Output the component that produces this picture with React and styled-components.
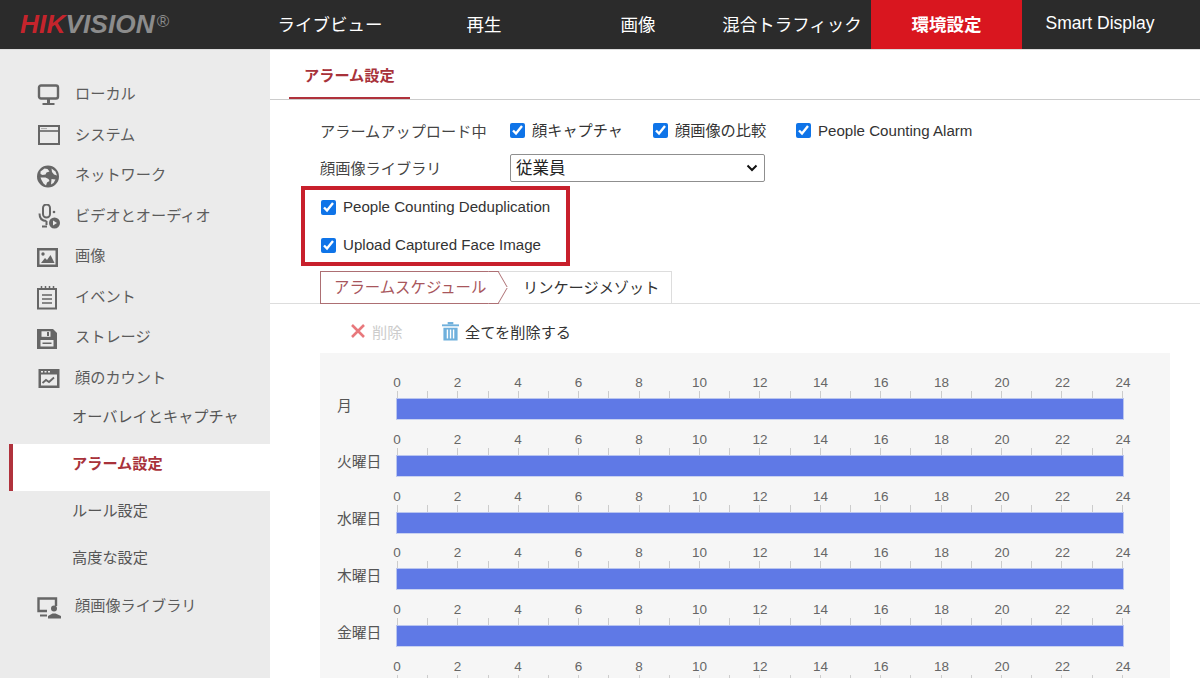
import React from "react";
import styled, { createGlobalStyle } from "styled-components";

const GlobalStyle = createGlobalStyle`
  html, body {
    margin: 0;
    height: 678px;
    overflow: hidden;
    background: #fff;
  }
  body {
    font-family: "Liberation Sans", "Noto Sans CJK JP", sans-serif;
    color: #444;
  }
`;

const Page = styled.div`
  width: 1200px;
  height: 678px;
  display: flex;
  flex-direction: column;
  overflow: hidden;
`;

const Header = styled.header`
  height: 49px;
  flex: none;
  display: flex;
  background: #2b2b2b;
  border-bottom: 1px solid #ddd;
`;

const Logo = styled.div`
  width: 253px;
  padding-left: 20px;
  box-sizing: border-box;
  display: flex;
  align-items: center;
  font-size: 26.2px;
  font-weight: bold;
  font-style: italic;
  letter-spacing: 0.1px;
  color: #8c8c8c;
  b {
    color: #c5242c;
  }
  sup {
    font-size: 17px;
    font-style: normal;
    font-weight: normal;
    margin: -6px 0 0 2px;
  }
`;

const NavItem = styled.div`
  width: ${(p) => (p.$active ? 151 : 154)}px;
  margin: 0 ${(p) => (p.$active ? 1 : 0)}px 0 ${(p) => (p.$active ? 2 : 0)}px;
  padding-bottom: 3px;
  box-sizing: border-box;
  display: flex;
  align-items: center;
  justify-content: center;
  color: #fff;
  font-size: 17.5px;
  font-weight: ${(p) => (p.$active ? "bold" : "normal")};
  background: ${(p) => (p.$active ? "#d9161f" : "transparent")};
`;

const Body = styled.div`
  flex: 1;
  display: flex;
  min-height: 0;
`;

const Sidebar = styled.aside`
  width: 270px;
  flex: none;
  padding-top: 23px;
  box-sizing: border-box;
  background: #ebebeb;
`;

const MenuRow = styled.div`
  height: 40.5px;
  padding: 0 0 2px 36px;
  box-sizing: border-box;
  display: flex;
  align-items: center;
  gap: 14px;
  font-size: 15.2px;
  color: #5c5c5c;
  svg {
    width: 25px;
    height: 25px;
    flex: none;
    margin-top: 6px;
    color: #666;
  }
`;

const SubRow = styled.div`
  height: 47px;
  margin-left: 9px;
  padding: 0 0 12px ${(p) => (p.$active ? 59 : 63)}px;
  box-sizing: border-box;
  display: flex;
  align-items: center;
  font-size: 15.2px;
  color: #555;
  ${(p) =>
    p.$active &&
    `
    background: #fff;
    border-left: 4px solid #b0323c;
    font-weight: bold;
    color: #a8323a;
  `}
`;

const Main = styled.main`
  flex: 1;
  min-width: 0;
  display: flex;
  flex-direction: column;
`;

const TabBar = styled.div`
  height: 50px;
  flex: none;
  padding-left: 19px;
  box-sizing: border-box;
  display: flex;
  border-bottom: 1px solid #ccc;
`;

const PageTab = styled.div`
  width: 121px;
  height: 49px;
  padding-left: 15px;
  box-sizing: border-box;
  display: flex;
  align-items: center;
  font-size: 15.2px;
  font-weight: bold;
  color: #a8323a;
  border-bottom: 2px solid #b0323c;
`;

const Form = styled.div`
  padding: 12px 0 0 50px;
  display: flex;
  flex-direction: column;
`;

const FormRow = styled.div`
  height: 37px;
  display: flex;
  align-items: center;
  font-size: 15.2px;
  color: #444;
`;

const FormLabel = styled.div`
  width: 190px;
  flex: none;
  padding-bottom: 2px;
`;

const CheckLabel = styled.label`
  width: ${(p) => (p.$width ? `${p.$width}px` : "auto")};
  display: flex;
  align-items: center;
  gap: 7px;
  font-size: ${(p) => (p.$latin ? "15.1px" : "15.2px")};
  line-height: 20px;
  color: #333;
  white-space: nowrap;
`;

const Check = styled.input.attrs({ type: "checkbox", defaultChecked: true })`
  width: 15px;
  height: 15px;
  margin: 0;
  flex: none;
  accent-color: #0f74e8;
`;

const SelectWrap = styled.div`
  position: relative;
  width: 255px;
  height: 28px;
  svg {
    position: absolute;
    right: 7px;
    top: 9px;
    pointer-events: none;
  }
`;

const Select = styled.select`
  width: 100%;
  height: 100%;
  padding: 0 5px;
  appearance: none;
  font-family: inherit;
  font-size: 16.5px;
  color: #222;
  background: #fff;
  border: 1px solid #8f8f8f;
  border-radius: 2px;
`;

const Highlight = styled.div`
  width: 269px;
  height: 80px;
  margin: 0 0 5px -19px;
  padding-left: 16px;
  box-sizing: border-box;
  border: 4px solid #c8202c;
  display: flex;
  flex-direction: column;
  justify-content: center;
  gap: 18px;
`;

const SubTabs = styled.div`
  height: 33px;
  flex: none;
  padding-left: 50px;
  box-sizing: border-box;
  display: flex;
  border-bottom: 1px solid #ddd;
`;

const ActiveSubTab = styled.div`
  position: relative;
  z-index: 1;
  width: 178px;
  height: 33px;
  padding: 0 0 3px 13px;
  box-sizing: border-box;
  display: flex;
  align-items: center;
  background: #fff;
  font-size: 15.4px;
  color: #a8565c;
  border: 1px solid #ad6f73;
  border-right: none;
  &::before,
  &::after {
    content: "";
    position: absolute;
    right: -5px;
    width: 10px;
    height: 16px;
    box-sizing: border-box;
    background: #fff;
    border-right: 1px solid #ad6f73;
  }
  &::before {
    top: -1px;
    transform: skewX(30deg);
    border-top: 1px solid #ad6f73;
  }
  &::after {
    bottom: -1px;
    transform: skewX(-30deg);
    border-bottom: 1px solid #ad6f73;
  }
`;

const IdleSubTab = styled.div`
  width: 174px;
  height: 32px;
  padding: 0 0 3px 25px;
  box-sizing: border-box;
  display: flex;
  align-items: center;
  font-size: 15.2px;
  color: #333;
  border-top: 1px solid #ddd;
  border-right: 1px solid #ddd;
`;

const Toolbar = styled.div`
  height: 49px;
  flex: none;
  padding: 5px 0 0 80px;
  box-sizing: border-box;
  display: flex;
  align-items: center;
`;

const ToolButton = styled.div`
  width: ${(p) => (p.$width ? `${p.$width}px` : "auto")};
  display: flex;
  align-items: center;
  gap: 6px;
  font-size: 15.2px;
  color: ${(p) => (p.$disabled ? "#ccc" : "#333")};
  svg {
    flex: none;
  }
`;

const SchedulePanel = styled.div`
  flex: 1;
  min-height: 0;
  margin: 0 30px 0 50px;
  padding: 23px 0 0 17px;
  overflow: hidden;
  background: #f6f6f6;
`;

const DayRow = styled.div`
  height: 56.8px;
  display: flex;
`;

const DayLabel = styled.div`
  width: 59px;
  flex: none;
  height: 20px;
  margin-top: 18px;
  display: flex;
  align-items: center;
  font-size: 14.8px;
  color: #555;
`;

const Track = styled.div`
  width: 728px;
  flex: none;
`;

const HourLabels = styled.div`
  height: 15px;
  padding: 0 1px;
  display: flex;
  justify-content: space-between;
`;

const HourLabel = styled.span`
  width: 0;
  display: flex;
  justify-content: center;
  font-family: "Liberation Sans", sans-serif;
  font-size: 13.5px;
  line-height: 14px;
  color: #666;
`;

const Ticks = styled.div`
  height: 7px;
  padding: 0 1px;
  display: flex;
  justify-content: space-between;
`;

const Tick = styled.i`
  width: 1px;
  background: #ccc;
`;

const Bar = styled.div`
  height: 22px;
  box-sizing: border-box;
  background: #5f79e6;
  border: 1px solid #b9c5ef;
  border-bottom-color: #c9d2f0;
`;

const IconMonitor = () => (
  <svg viewBox="0 0 25 25" fill="none" stroke="currentColor">
    <rect x="3" y="2.5" width="19" height="13" rx="2" strokeWidth="2.4" />
    <path d="M12.5 16v4" strokeWidth="3" />
    <path d="M6.5 21h12" strokeWidth="2" />
  </svg>
);

const IconSystem = () => (
  <svg viewBox="0 0 25 25" fill="none" stroke="currentColor">
    <rect x="3" y="3" width="20" height="18" strokeWidth="2" />
    <path d="M3 8h20" strokeWidth="1.6" />
    <path d="M5.5 5.6h5" strokeWidth="1" strokeDasharray="1 1" />
  </svg>
);

const IconGlobe = () => (
  <svg viewBox="0 0 25 25" fill="currentColor">
    <path
      fillRule="evenodd"
      d="M12 1.5a11 11 0 1 0 0 22 11 11 0 0 0 0-22zM4.500 7.500l4-3 3 .5 2 2.500-3 1-1 2-3 .5-2-1zM15.500 4.500l4 3 1.500 4-3-1-2-2.500zM4.500 13.500h5l3 1.500 1 2-2.500 1.500-1 3-2.500-2-2-3.500zM15.500 15l4 .5-2 3.500-2.500 1.500z"
    />
  </svg>
);

const IconMic = () => (
  <svg viewBox="0 0 25 25" fill="none" stroke="currentColor">
    <rect x="7" y="0.500" width="7" height="13" rx="3.500" strokeWidth="2" />
    <path d="M3.500 9.500c0 5 3 7.500 7 7.500M10.500 17v4M6 22.500h5" strokeWidth="2" />
    <circle cx="18" cy="8" r="1.300" fill="currentColor" stroke="none" />
    <circle cx="18.500" cy="19" r="5.500" fill="currentColor" stroke="none" />
    <path d="M17 16.500l4 2.500-4 2.500z" fill="#ebebeb" stroke="none" />
  </svg>
);

const IconImage = () => (
  <svg viewBox="0 0 25 25">
    <rect x="1" y="3" width="21" height="19" fill="#666" />
    <rect x="3.500" y="5.500" width="16" height="14" fill="#ebebeb" />
    <circle cx="7" cy="9" r="1.700" fill="#666" />
    <path d="M5 18l4-5 2 2 3.500-5 4 8z" fill="#666" />
  </svg>
);

const IconEvent = () => (
  <svg viewBox="0 0 25 25" fill="none" stroke="currentColor">
    <rect x="2" y="4" width="18" height="19.500" strokeWidth="2" />
    <path d="M5.500 1v4M9.500 1v4M13.500 1v4M17.500 1v4" strokeWidth="1.500" />
    <path d="M6 10h10M6 14h10M6 18h10" strokeWidth="1.600" />
  </svg>
);

const IconStorage = () => (
  <svg viewBox="0 0 25 25">
    <path d="M1 3h16l4 4v16H1z" fill="#666" />
    <rect x="5.500" y="5.300" width="9" height="5.500" fill="#ebebeb" />
    <rect x="11" y="6" width="2" height="4" fill="#666" />
    <rect x="4.500" y="14" width="13" height="6.500" fill="#ebebeb" />
    <rect x="6.500" y="16.500" width="9" height="1.500" fill="#666" />
  </svg>
);

const IconFaceCount = () => (
  <svg viewBox="0 0 25 25" fill="none">
    <rect x="2.500" y="3" width="21" height="19" fill="#666" />
    <rect x="5" y="8.500" width="16" height="11" fill="#ebebeb" />
    <path d="M5 5.700h10" stroke="#ebebeb" strokeWidth="1.600" strokeDasharray="2 1.500" />
    <path d="M6.500 17l3.500-3 3 2 5-4.500" stroke="#666" strokeWidth="1.800" />
  </svg>
);

const IconLibrary = () => (
  <svg viewBox="0 0 25 25" fill="none">
    <path d="M11 16H2.500V3.500H20V11" stroke="#666" strokeWidth="2.400" />
    <path d="M4 20.500h7" stroke="#666" strokeWidth="2" />
    <circle cx="18" cy="13.500" r="3" fill="#666" />
    <path d="M12 23.500v-2.500l4.500-2.500h3L25 21v2.500z" fill="#666" />
  </svg>
);

const IconClose = () => (
  <svg width="16" height="16" viewBox="0 0 16 16">
    <path d="M2 2l12 12M14 2L2 14" stroke="#e8787c" strokeWidth="2.600" fill="none" />
  </svg>
);

const IconTrash = () => (
  <svg width="17" height="20" viewBox="0 0 18 20" fill="#6fb0dc">
    <rect x="0" y="3" width="18" height="2" />
    <rect x="6" y="0.500" width="6" height="2.500" />
    <path
      fillRule="evenodd"
      d="M1.500 6.500h15V20h-15zM5 8.500v9.500h1.500V8.500zM8.300 8.500v9.500h1.500V8.500zM11.500 8.500v9.500H13V8.500z"
    />
  </svg>
);

const IconChevron = () => (
  <svg width="12" height="10" viewBox="0 0 12 10" fill="none">
    <path d="M1.500 2.500L6 7l4.500-4.500" stroke="#111" strokeWidth="2" />
  </svg>
);

const menuItems = [
  { label: "ローカル", Icon: IconMonitor },
  { label: "システム", Icon: IconSystem },
  { label: "ネットワーク", Icon: IconGlobe },
  { label: "ビデオとオーディオ", Icon: IconMic },
  { label: "画像", Icon: IconImage },
  { label: "イベント", Icon: IconEvent },
  { label: "ストレージ", Icon: IconStorage },
  { label: "顔のカウント", Icon: IconFaceCount },
];

const navItems = ["ライブビュー", "再生", "画像", "混合トラフィック", "環境設定", "Smart Display"];
// the sixth row only shows its hour ruler above the fold
const days = ["月", "火曜日", "水曜日", "木曜日", "金曜日", ""];
const hours = Array.from({ length: 13 }, (_, i) => i * 2);
const ticks = Array.from({ length: 25 }, (_, i) => i);

export default function App() {
  return (
    <Page>
      <GlobalStyle />
      <Header>
        <Logo>
          <b>HIK</b>VISION<sup>®</sup>
        </Logo>
        {navItems.map((item) => (
          <NavItem key={item} $active={item === "環境設定"}>
            {item}
          </NavItem>
        ))}
      </Header>
      <Body>
        <Sidebar>
          {menuItems.map(({ label, Icon }) => (
            <MenuRow key={label}>
              <Icon />
              {label}
            </MenuRow>
          ))}
          <SubRow>オーバレイとキャプチャ</SubRow>
          <SubRow $active>アラーム設定</SubRow>
          <SubRow>ルール設定</SubRow>
          <SubRow>高度な設定</SubRow>
          <MenuRow>
            <IconLibrary />
            顔画像ライブラリ
          </MenuRow>
        </Sidebar>
        <Main>
          <TabBar>
            <PageTab>アラーム設定</PageTab>
          </TabBar>
          <Form>
            <FormRow>
              <FormLabel>アラームアップロード中</FormLabel>
              <CheckLabel $width={143}>
                <Check />
                顔キャプチャ
              </CheckLabel>
              <CheckLabel $width={143}>
                <Check />
                顔画像の比較
              </CheckLabel>
              <CheckLabel $latin>
                <Check />
                People Counting Alarm
              </CheckLabel>
            </FormRow>
            <FormRow>
              <FormLabel>顔画像ライブラリ</FormLabel>
              <SelectWrap>
                <Select defaultValue="staff">
                  <option value="staff">従業員</option>
                </Select>
                <IconChevron />
              </SelectWrap>
            </FormRow>
            <Highlight>
              <CheckLabel $latin>
                <Check />
                People Counting Deduplication
              </CheckLabel>
              <CheckLabel $latin>
                <Check />
                Upload Captured Face Image
              </CheckLabel>
            </Highlight>
          </Form>
          <SubTabs>
            <ActiveSubTab>アラームスケジュール</ActiveSubTab>
            <IdleSubTab>リンケージメゾット</IdleSubTab>
          </SubTabs>
          <Toolbar>
            <ToolButton $disabled $width={92}>
              <IconClose />
              削除
            </ToolButton>
            <ToolButton>
              <IconTrash />
              全てを削除する
            </ToolButton>
          </Toolbar>
          <SchedulePanel>
            {days.map((day, i) => (
              <DayRow key={i}>
                <DayLabel>{day}</DayLabel>
                <Track>
                  <HourLabels>
                    {hours.map((h) => (
                      <HourLabel key={h}>{h}</HourLabel>
                    ))}
                  </HourLabels>
                  <Ticks>
                    {ticks.map((t) => (
                      <Tick key={t} />
                    ))}
                  </Ticks>
                  <Bar />
                </Track>
              </DayRow>
            ))}
          </SchedulePanel>
        </Main>
      </Body>
    </Page>
  );
}
